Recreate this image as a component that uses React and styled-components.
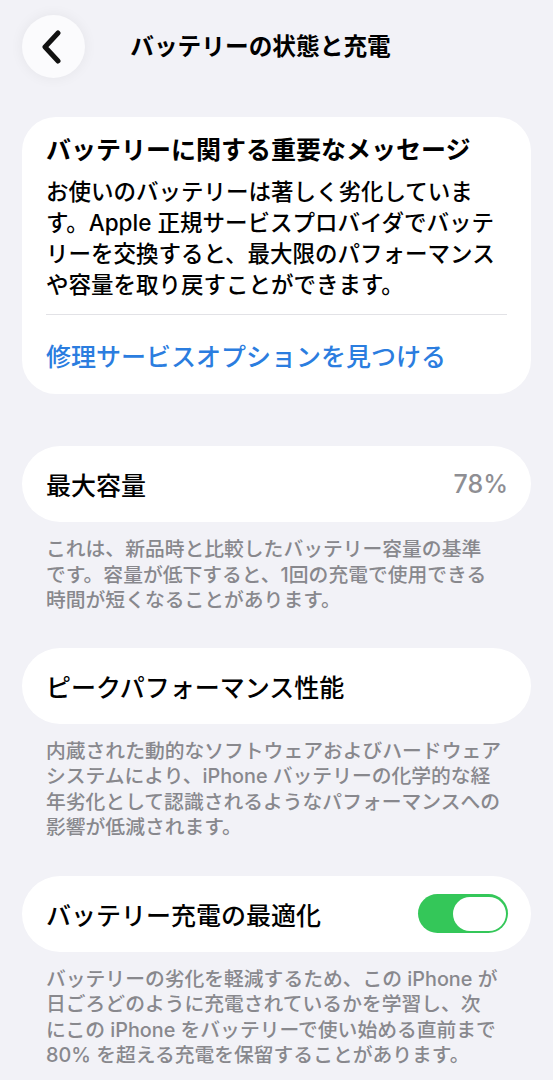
import React from 'react';
import styled, { createGlobalStyle } from 'styled-components';

const GlobalStyle = createGlobalStyle`
    html, body {
        margin: 0;
        padding: 0;
        background: #f2f2f7;
    }
    body {
        font-family: Inter, "Noto Sans CJK JP", sans-serif;
        color: #000;
        -webkit-font-smoothing: antialiased;
    }
`;

const Screen = styled.div`
    width: 553px;
    min-height: 1080px;
    background: #f2f2f7;
    overflow: hidden;
`;

const Header = styled.header`
    display: grid;
    grid-template-columns: 1fr auto 1fr;
    align-items: center;
    padding: 15px 22px 0;
    height: 62px;
    margin-bottom: 40px;
`;

const BackButton = styled.button`
    justify-self: start;
    width: 63px;
    height: 63px;
    border: none;
    border-radius: 50%;
    background: #fbfbfd;
    box-shadow: 0 0 14px rgba(0, 0, 0, 0.06);
    display: flex;
    align-items: center;
    justify-content: center;
    padding: 0 4px 0 0;
    cursor: pointer;
`;

const Title = styled.h1`
    margin: 0 32px 0 0;
    font-size: 23.7px;
    font-weight: 700;
    line-height: 34px;
    white-space: nowrap;
`;

const List = styled.main`
    padding: 0 22px;
`;

const Card = styled.section`
    background: #fff;
    border-radius: 34px;
    padding: 16px 24px 0;
`;

const CardHeading = styled.h2`
    margin: 0;
    font-size: 25px;
    font-weight: 700;
    line-height: 34px;
    white-space: nowrap;
`;

const CardBody = styled.p`
    margin: 9px 0 0;
    font-size: 22.5px;
    font-weight: 500;
    line-height: 31px;
    white-space: nowrap;
`;

const Divider = styled.div`
    height: 1px;
    background: #e2e2e6;
    margin-top: 14px;
`;

const LinkRow = styled.a`
    display: flex;
    align-items: center;
    height: 79px;
    font-size: 25px;
    font-weight: 500;
    color: #2b7ddf;
    text-decoration: none;
    white-space: nowrap;
`;

const Group = styled.div`
    margin-top: ${(p) => p.$gap}px;
`;

const Row = styled.div`
    display: flex;
    align-items: center;
    justify-content: space-between;
    height: 76px;
    background: #fff;
    border-radius: 38px;
    padding: 0 23px 0 24px;
`;

const RowLabel = styled.span`
    font-size: 25px;
    font-weight: 500;
    white-space: nowrap;
`;

const RowValue = styled.span`
    font-size: 25px;
    font-weight: 500;
    color: #8e8e93;
`;

const Footer = styled.p`
    margin: 0;
    padding: 15px 24px 0;
    font-size: 19.8px;
    font-weight: 500;
    line-height: 25.5px;
    color: #88888d;
    white-space: nowrap;
`;

const Toggle = styled.div`
    width: 90px;
    height: 39px;
    border-radius: 20px;
    background: ${(p) => (p.$on ? '#34c759' : '#e9e9eb')};
    display: flex;
    align-items: center;
    justify-content: ${(p) => (p.$on ? 'flex-end' : 'flex-start')};
    padding: 0 2.5px;
    box-sizing: border-box;
`;

const Knob = styled.div`
    width: 53px;
    height: 34px;
    border-radius: 17px;
    background: #fff;
`;

function Chevron() {
    return (
        <svg width="22" height="34" viewBox="0 0 22 34">
            <path d="M17 3 L4 17 L17 31" fill="none" stroke="#111" strokeWidth="5" strokeLinecap="round" strokeLinejoin="round" />
        </svg>
    );
}

export default function App() {
    return (
        <Screen>
            <GlobalStyle />
            <Header>
                <BackButton aria-label="戻る">
                    <Chevron />
                </BackButton>
                <Title>バッテリーの状態と充電</Title>
                <div />
            </Header>

            <List>
                <Card>
                    <CardHeading>バッテリーに関する重要なメッセージ</CardHeading>
                    <CardBody>
                        お使いのバッテリーは著しく劣化していま<br />
                        す。Apple 正規サービスプロバイダでバッテ<br />
                        リーを交換すると、最大限のパフォーマンス<br />
                        や容量を取り戻すことができます。
                    </CardBody>
                    <Divider />
                    <LinkRow href="#">修理サービスオプションを見つける</LinkRow>
                </Card>

                <Group $gap={52}>
                    <Row>
                        <RowLabel>最大容量</RowLabel>
                        <RowValue>78%</RowValue>
                    </Row>
                    <Footer>
                        これは、新品時と比較したバッテリー容量の基準<br />
                        です。容量が低下すると、1回の充電で使用できる<br />
                        時間が短くなることがあります。
                    </Footer>
                </Group>

                <Group $gap={34}>
                    <Row>
                        <RowLabel>ピークパフォーマンス性能</RowLabel>
                    </Row>
                    <Footer>
                        内蔵された動的なソフトウェアおよびハードウェア<br />
                        システムにより、iPhone バッテリーの化学的な経<br />
                        年劣化として認識されるようなパフォーマンスへの<br />
                        影響が低減されます。
                    </Footer>
                </Group>

                <Group $gap={35}>
                    <Row>
                        <RowLabel>バッテリー充電の最適化</RowLabel>
                        <Toggle $on>
                            <Knob />
                        </Toggle>
                    </Row>
                    <Footer>
                        バッテリーの劣化を軽減するため、この iPhone が<br />
                        日ごろどのように充電されているかを学習し、次<br />
                        にこの iPhone をバッテリーで使い始める直前まで<br />
                        80% を超える充電を保留することがあります。
                    </Footer>
                </Group>
            </List>
        </Screen>
    );
}
